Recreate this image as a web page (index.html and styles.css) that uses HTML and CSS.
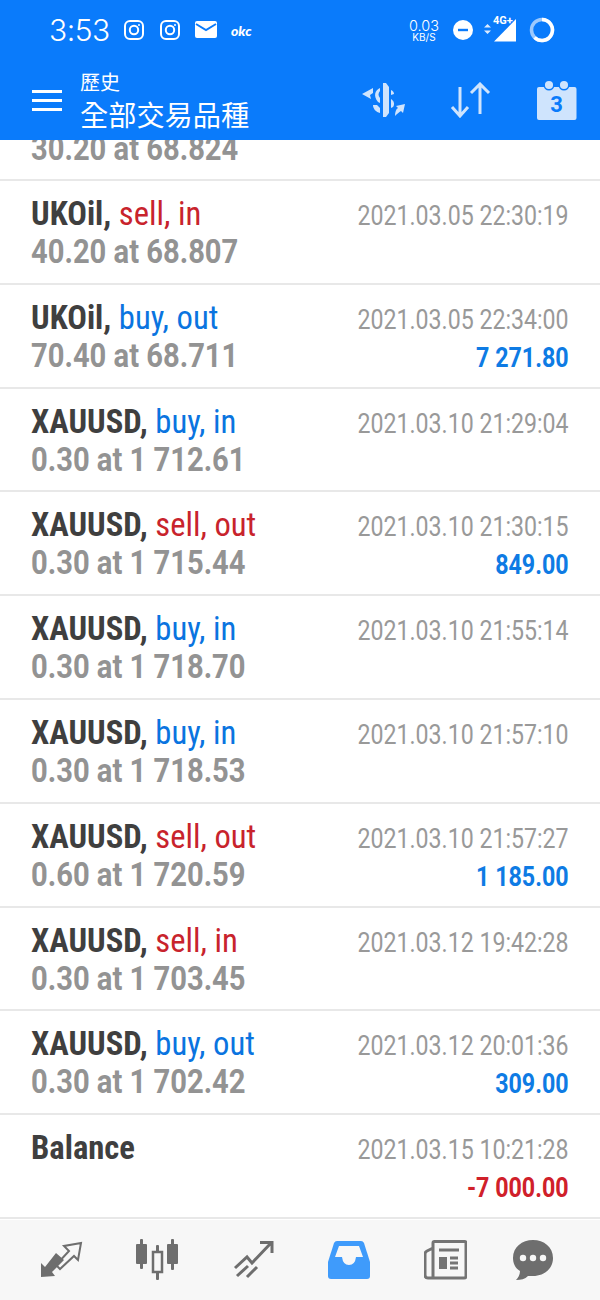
FILE: index.html
```html
<!DOCTYPE html>
<html lang="zh-TW">
<head>
    <meta charset="UTF-8">
    <meta name="viewport" content="width=device-width, initial-scale=1.0">
    <title>歷史</title>
    <link rel="stylesheet" href="styles.css">
</head>
<body>
    <div class="phone">
        <header class="app-header">
            <div class="status-bar">
                <span class="clock">3:53</span>
                <svg class="st-icon" width="22" height="22" viewBox="0 0 22 22" fill="none" stroke="#fff" stroke-width="2"><rect x="2" y="2" width="18" height="18" rx="5"/><circle cx="11" cy="11" r="4.2"/><circle cx="16" cy="6" r="1" fill="#fff" stroke="none"/></svg>
                <svg class="st-icon" width="22" height="22" viewBox="0 0 22 22" fill="none" stroke="#fff" stroke-width="2"><rect x="2" y="2" width="18" height="18" rx="5"/><circle cx="11" cy="11" r="4.2"/><circle cx="16" cy="6" r="1" fill="#fff" stroke="none"/></svg>
                <svg class="st-icon" width="22" height="18" viewBox="0 0 22 18"><rect width="22" height="17" rx="2" fill="#fff"/><path d="M1 3l10 6 10-6" fill="none" stroke="#0a7bfb" stroke-width="2"/></svg>
                <span class="okc">okc</span>
                <span class="spacer"></span>
                <span class="speed"><b>0.03</b><i>KB/S</i></span>
                <svg class="dnd" width="20" height="20" viewBox="0 0 20 20"><circle cx="10" cy="10" r="10" fill="#fff"/><rect x="5" y="8.8" width="10" height="2.4" fill="#0a7bfb"/></svg>
                <span class="signal">
                    <svg width="33" height="24" viewBox="0 0 33 24"><path d="M0 9.5l3.5-3.5 3.5 3.5zM0 12.500l3.500 3.500 3.500-3.500z" fill="#dcebff"/><path d="M10 23.500L32 1v22.500z" fill="#fff"/></svg>
                    <span class="net">4G+</span>
                </span>
                <svg width="26" height="26" viewBox="0 0 26 26" fill="none" stroke-width="3.500"><circle cx="13" cy="13" r="10.500" stroke="#9cc9fd"/><path d="M13 2.500a10.500 10.500 0 1 1-7.400 18" stroke="#fff"/></svg>
            </div>
            <div class="toolbar">
                <div class="burger"><span></span><span></span><span></span></div>
                <div class="titles">
                    <div class="title-small">歷史</div>
                    <div class="title-big">全部交易品種</div>
                </div>
                <div class="tool-icons">
                    <svg width="44" height="36" viewBox="0 0 44 36"><g fill="#cfe4fd"><path d="M22 1h3l3 4v26l-3 4h-3z"/><path d="M19 6c-5 2-7 8-2 14l2 1v-5c-2-2-2-5 0-7z"/><path d="M12 23c0 4 3 7 7 8v-5l-3-3z"/><path d="M30 8c2 1 3 2 3 4l-3 1z"/><path d="M30 17c3 2 4 5 2 8l-2 1z"/><path d="M12 6L1 12l9 5-1-4 3-2z"/><path d="M34 34c0-4 1-7 3-8l-2-2 9-2-2 9-2-2c-2 1-4 3-6 5z"/></g></svg>
                    <svg width="42" height="36" viewBox="0 0 42 36" fill="none" stroke="#cfe4fd" stroke-width="3"><path d="M11 5v28M3 25l8 9 8-9M31 32V2M22 11l9-9 9 9"/></svg>
                    <svg class="cal" width="40" height="40" viewBox="0 0 40 40"><rect y="7" width="39.500" height="33" rx="2" fill="#cfe4fd"/><circle cx="12" cy="5" r="4.800" fill="#cfe4fd" stroke="#0a7bfb" stroke-width="1.500"/><circle cx="27" cy="5" r="4.800" fill="#cfe4fd" stroke="#0a7bfb" stroke-width="1.500"/><text x="19.500" y="32" text-anchor="middle" class="cal-day">3</text></svg>
                </div>
            </div>
        </header>

        <main class="deal-list">
            <div class="deal deal-cut">
                <div class="deal-left"><div class="qty">30.20 at 68.824</div></div>
            </div>
            <div class="deal">
                <div class="deal-left"><div class="line"><span class="sym">UKOil,</span> <span class="sell">sell, in</span></div><div class="qty">40.20 at 68.807</div></div>
                <div class="deal-right"><div class="when">2021.03.05 22:30:19</div></div>
            </div>
            <div class="deal">
                <div class="deal-left"><div class="line"><span class="sym">UKOil,</span> <span class="buy">buy, out</span></div><div class="qty">70.40 at 68.711</div></div>
                <div class="deal-right"><div class="when">2021.03.05 22:34:00</div><div class="profit">7 271.80</div></div>
            </div>
            <div class="deal">
                <div class="deal-left"><div class="line"><span class="sym">XAUUSD,</span> <span class="buy">buy, in</span></div><div class="qty">0.30 at 1 712.61</div></div>
                <div class="deal-right"><div class="when">2021.03.10 21:29:04</div></div>
            </div>
            <div class="deal">
                <div class="deal-left"><div class="line"><span class="sym">XAUUSD,</span> <span class="sell">sell, out</span></div><div class="qty">0.30 at 1 715.44</div></div>
                <div class="deal-right"><div class="when">2021.03.10 21:30:15</div><div class="profit">849.00</div></div>
            </div>
            <div class="deal">
                <div class="deal-left"><div class="line"><span class="sym">XAUUSD,</span> <span class="buy">buy, in</span></div><div class="qty">0.30 at 1 718.70</div></div>
                <div class="deal-right"><div class="when">2021.03.10 21:55:14</div></div>
            </div>
            <div class="deal">
                <div class="deal-left"><div class="line"><span class="sym">XAUUSD,</span> <span class="buy">buy, in</span></div><div class="qty">0.30 at 1 718.53</div></div>
                <div class="deal-right"><div class="when">2021.03.10 21:57:10</div></div>
            </div>
            <div class="deal">
                <div class="deal-left"><div class="line"><span class="sym">XAUUSD,</span> <span class="sell">sell, out</span></div><div class="qty">0.60 at 1 720.59</div></div>
                <div class="deal-right"><div class="when">2021.03.10 21:57:27</div><div class="profit">1 185.00</div></div>
            </div>
            <div class="deal">
                <div class="deal-left"><div class="line"><span class="sym">XAUUSD,</span> <span class="sell">sell, in</span></div><div class="qty">0.30 at 1 703.45</div></div>
                <div class="deal-right"><div class="when">2021.03.12 19:42:28</div></div>
            </div>
            <div class="deal">
                <div class="deal-left"><div class="line"><span class="sym">XAUUSD,</span> <span class="buy">buy, out</span></div><div class="qty">0.30 at 1 702.42</div></div>
                <div class="deal-right"><div class="when">2021.03.12 20:01:36</div><div class="profit">309.00</div></div>
            </div>
            <div class="deal">
                <div class="deal-left"><div class="line"><span class="sym">Balance</span></div></div>
                <div class="deal-right"><div class="when">2021.03.15 10:21:28</div><div class="profit loss">-7 000.00</div></div>
            </div>
        </main>

        <nav class="bottom-nav">
            <svg width="43" height="38" viewBox="0 0 43 38"><path d="M1 36V22l4 4 11-14 8 7-12 12 3 4z" fill="#6e6e6e"/><path d="M41 2L24 5l5 5-13 14 4 4 14-13 4 4z" fill="none" stroke="#6e6e6e" stroke-width="2"/></svg>
            <svg class="nav-candles" width="44" height="42" viewBox="0 0 44 42" fill="#6e6e6e"><rect x="1" y="5" width="11" height="20" rx="1"/><rect x="5" y="0" width="3" height="30" rx="1"/><rect x="32" y="5" width="11" height="20" rx="1"/><rect x="36" y="0" width="3" height="31" rx="1"/><rect x="21" y="6" width="3" height="35" rx="1"/><rect x="18" y="13" width="9" height="20" fill="#f7f7f7" stroke="#6e6e6e" stroke-width="2.500"/></svg>
            <svg width="41" height="38" viewBox="0 0 41 38" fill="none" stroke="#6e6e6e" stroke-width="3"><path d="M2 27l12-11 5 6L38 2M27 1.500h12V12M4 35l11-10M14 36l10-10"/></svg>
            <svg width="42" height="38" viewBox="0 0 42 38"><path d="M9 0h24q2 0 3 2l6 19v14q0 3-3 3H3q-3 0-3-3V21L6 2q1-2 3-2z" fill="#3f9bfb"/><path d="M7 16L11 5h20l4 11h-7q-1 8-7 8t-7-8z" fill="#f7f7f7"/></svg>
            <svg width="43" height="40" viewBox="0 0 43 40" fill="none" stroke="#747474" stroke-width="3"><path d="M9 38V3q0-1.500 1.500-1.500h30Q42 1.500 42 3v33q0 2-2 2H4q-3 0-3-3V14q0-2 2-3l6-3"/><path d="M15 10h20M26 18h8M26 23h8M26 28h8"/><rect x="15" y="17" width="8" height="12" fill="#747474" stroke="none"/></svg>
            <svg class="nav-last" width="42" height="41" viewBox="0 0 42 41"><path d="M21 0c11 0 20 7 20 18s-9 18-20 18h-5c-3 3-7 4-12 4 2-2 4-5 4-9C3 28 1 23 1 18 1 7 10 0 21 0z" fill="#6e6e6e"/><circle cx="11" cy="18" r="3.200" fill="#f7f7f7"/><circle cx="21" cy="18" r="3.200" fill="#f7f7f7"/><circle cx="31" cy="18" r="3.200" fill="#f7f7f7"/></svg>
        </nav>
    </div>
</body>
</html>
```

FILE: styles.css
```css
body {
    margin: 0;
    background: white;
    font-family: 'Roboto', 'Liberation Sans', sans-serif;
}

.phone {
    width: 600px;
    height: 1300px;
    overflow: hidden;
    display: flex;
    flex-direction: column;
}

.app-header {
    height: 140px;
    background: #0a7bfb;
    color: white;
    flex-shrink: 0;
}

.status-bar {
    height: 60px;
    display: flex;
    align-items: center;
    padding: 0 45px 0 49px;
    gap: 14px;
}

.clock {
    font-family: 'Inter', sans-serif;
    font-size: 30px;
    font-weight: 300;
    letter-spacing: -0.5px;
    width: 60px;
}

.okc {
    font-family: 'Lato', sans-serif;
    font-size: 14px;
    font-weight: 900;
    font-style: italic;
}

.spacer {
    flex: 1;
}

.speed {
    display: flex;
    flex-direction: column;
    align-items: center;
    font-family: 'Inter', sans-serif;
}

.speed b {
    font-size: 14.500px;
    font-weight: 300;
    line-height: 14px;
}

.speed i {
    font-size: 10px;
    font-style: normal;
    line-height: 9px;
}

.dnd {
    margin-right: -3px;
}

.signal {
    position: relative;
    display: flex;
    margin-right: -2px;
}

.net {
    position: absolute;
    top: -4px;
    left: 9px;
    font-size: 11px;
    font-weight: 700;
    text-shadow: 0 0 2px #0a7bfb;
}

.toolbar {
    display: flex;
    align-items: center;
    height: 80px;
    padding: 0 23px 0 32px;
}

.burger {
    width: 30px;
    display: flex;
    flex-direction: column;
    gap: 6px;
    margin-right: 18px;
}

.burger span {
    height: 3px;
    background: white;
}

.titles {
    font-family: 'Noto Sans CJK TC', sans-serif;
    flex: 1;
}

.title-small {
    font-size: 20px;
    line-height: 28px;
}

.title-big {
    font-size: 28.200px;
    line-height: 36px;
}

.tool-icons {
    display: flex;
    align-items: center;
    gap: 44px;
}

.cal {
    margin-left: 2px;
}

.cal-day {
    font-family: 'Roboto', sans-serif;
    font-size: 22px;
    font-weight: 700;
    fill: #0a7bfb;
}

.deal-list {
    flex: 1;
    overflow: hidden;
}

.deal {
    height: 101.800px;
    border-bottom: 2px solid #e8e8e8;
    padding: 0 31px;
    display: flex;
    justify-content: space-between;
}

.deal-cut {
    height: 23px;
    padding-bottom: 16px;
    overflow: hidden;
    align-items: flex-end;
}

.deal-left,
.deal-right {
    padding-top: 12px;
}

.deal-left {
    padding-top: 9px;
}

.deal-cut .deal-left {
    padding-top: 0;
}

.deal-right {
    text-align: right;
}

.line {
    font-size: 34px;
    line-height: 46px;
    font-stretch: condensed;
    transform: scaleX(0.96);
    transform-origin: left;
    white-space: nowrap;
}

.sym {
    font-weight: 700;
    color: #3f3f3f;
}

.sell {
    color: #c8232c;
}

.buy {
    color: #0a74e0;
}

.qty {
    font-size: 34px;
    line-height: 30px;
    font-weight: 700;
    color: #939393;
    transform: scaleX(0.857);
    transform-origin: left;
    white-space: nowrap;
}

.when {
    font-size: 28px;
    line-height: 46px;
    color: #999;
    transform: scaleX(0.826);
    transform-origin: right;
    white-space: nowrap;
}

.profit {
    font-size: 28px;
    line-height: 30px;
    font-weight: 700;
    color: #0e7be4;
    transform: scaleX(0.83);
    transform-origin: right;
}

.profit.loss {
    color: #d0202a;
}

.bottom-nav {
    height: 80px;
    flex-shrink: 0;
    background: #f7f7f7;
    display: flex;
    align-items: center;
    gap: 54px;
    padding: 0 0 0 40px;
}

.nav-candles {
    margin-left: -2px;
}

.nav-last {
    margin-left: -9px;
}
```
